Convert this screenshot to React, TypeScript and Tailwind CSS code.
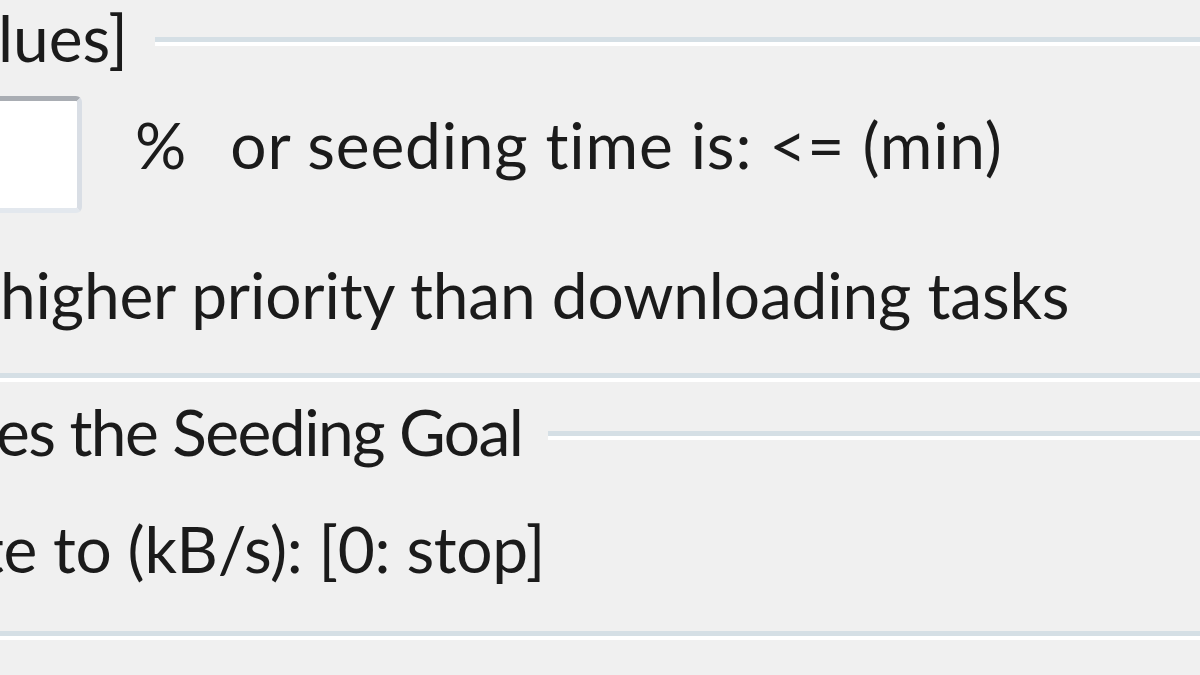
import React from 'react';

// Zoomed-in crop of a seeding options dialog; rows are cut at the left edge,
// so each row carries its hidden prefix in a zero-width, right-aligned box.

const font = { fontFamily: '"Lato", "Open Sans", sans-serif' };

function Clip({ children }: { children: React.ReactNode }) {
    return (
        <div className="w-0 flex justify-end whitespace-nowrap shrink-0">
            <span>{children}</span>
        </div>
    );
}

function GroupLine({ className = '' }: { className?: string }) {
    return (
        <div className={`h-[9px] border-t-[5px] border-b-[4px] border-t-[#d5dfe5] border-b-white ${className}`}></div>
    );
}

export default function App() {
    return (
        <div
            className="w-[1200px] h-[675px] overflow-hidden bg-[#f0f0f0] text-[#1b1b1b] text-[64px] leading-[64px] [font-variant-ligatures:none]"
            style={font}
        >
            {/* Group header: seeding goal values */}
            <div className="flex mt-[6px] h-[64px] -ml-[2px]">
                <Clip>Seeding Goal [0: no limit for both va</Clip>
                <span className="whitespace-nowrap">lues]</span>
                <GroupLine className="flex-1 ml-[27px] mt-[31px]" />
            </div>

            {/* Ratio / time row */}
            <div className="flex items-start mt-[26px] h-[117px]">
                <Clip>Stop seeding when share ratio &gt;= </Clip>
                <div className="-ml-[30px] w-[112px] h-[117px] bg-white border-[5px] border-t-[#a9adb3] border-r-[#d9dee5] border-b-[#e3e8ee] border-l-[#d9dee5] rounded-[6px] shrink-0"></div>
                <span className="ml-[53px] mt-[17px] whitespace-nowrap">%</span>
                <span className="ml-[44px] mt-[17px] whitespace-nowrap tracking-[0.8px]">or seeding time is: &lt;= (min)</span>
            </div>

            {/* Priority row */}
            <div className="flex mt-[50px] h-[64px]">
                <Clip>Seeding tasks have </Clip>
                <span className="whitespace-nowrap tracking-[-0.15px]">higher priority than downloading tasks</span>
            </div>

            <GroupLine className="mt-[46px]" />

            {/* Group header: after goal */}
            <div className="flex mt-[18px] h-[64px] -ml-[4px]">
                <Clip>When a task reach</Clip>
                <span className="whitespace-nowrap tracking-[-1.5px]">es the Seeding Goal</span>
                <GroupLine className="flex-1 ml-[26px] mt-[31px]" />
            </div>

            {/* Upload limit row */}
            <div className="flex mt-[53px] h-[64px] -ml-[19px]">
                <Clip>Limit upload ra</Clip>
                <span className="whitespace-nowrap tracking-[-0.3px]">te to (kB/s): [0: stop]</span>
            </div>

            <GroupLine className="mt-[50px]" />
        </div>
    );
}
